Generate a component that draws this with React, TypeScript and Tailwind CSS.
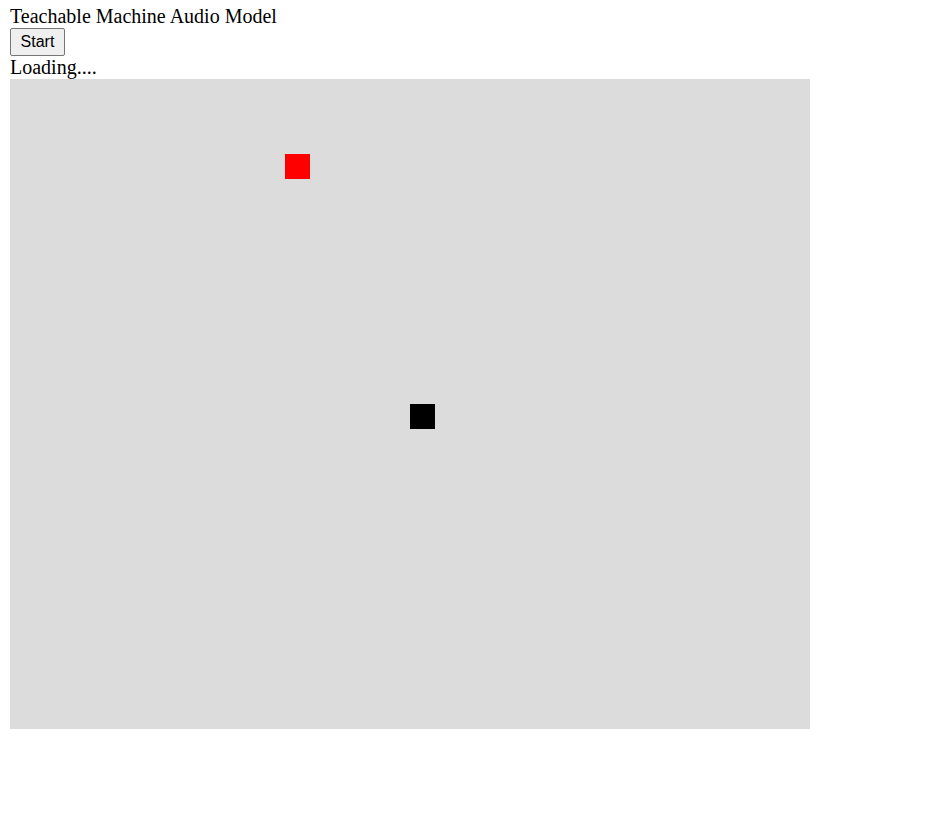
export default function App() {
  return (
    <div className="bg-white min-h-[833px] pl-[10px] pt-[5px] font-['Liberation_Serif',serif] text-[20px] leading-[23px] text-black">
      <div>Teachable Machine Audio Model</div>
      <div className="h-[28px] flex items-start">
        <button className="h-[28px] w-[55px] border border-[#767676] bg-[#efefef] rounded-[2px] font-['Liberation_Sans',Arial,sans-serif] text-[16px] leading-[18px] text-black flex items-center justify-center">
          Start
        </button>
      </div>
      <div>Loading....</div>
      <div className="relative w-[800px] h-[650px] bg-[#dcdcdc]">
        <div className="absolute left-[275px] top-[75px] w-[25px] h-[25px] bg-[#ff0000]" />
        <div className="absolute left-[400px] top-[325px] w-[25px] h-[25px] bg-black" />
      </div>
    </div>
  );
}
